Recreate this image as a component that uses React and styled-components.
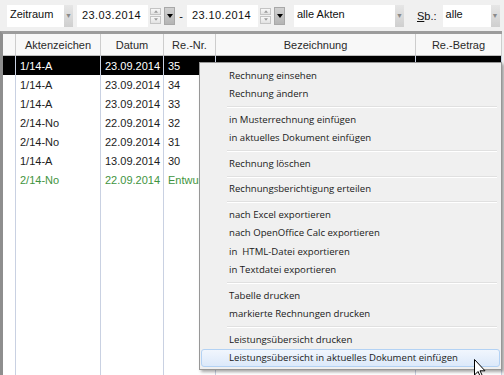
import React from "react";
import styled, { createGlobalStyle } from "styled-components";

const GlobalStyle = createGlobalStyle`
  html, body { margin: 0; padding: 0; background: #f0f0f0; }
  body { font-family: "Liberation Sans", Arial, sans-serif; }
`;

const Screen = styled.div`
  position: relative;
  width: 504px;
  height: 375px;
  overflow: hidden;
  background: #f0f0f0;
  display: flex;
  flex-direction: column;
`;

const Toolbar = styled.div`
  height: 31px;
  flex: none;
  display: flex;
  align-items: center;
  padding-left: 7px;
  font-size: 11px;
  color: #111;
`;

const Combo = styled.div`
  width: ${(p) => p.$w}px;
  height: 22px;
  display: flex;
  margin-right: ${(p) => p.$mr || 0}px;
  background: #fff;
`;

const ComboText = styled.div`
  flex: 1;
  padding: 3px 0 0 3px;
`;

const ComboBtn = styled.div`
  width: 9px;
  display: flex;
  align-items: center;
  justify-content: center;
  background: linear-gradient(#e6e6e6, #cfcfcf);
  color: #8a8a8a;
  font-size: 7px;
`;

const DateField = styled.div`
  width: 71px;
  height: 22px;
  box-sizing: border-box;
  padding: 4px 0 0 5px;
  background: #fff;
  letter-spacing: 0.4px;
`;

const Spin = styled.div`
  width: 11px;
  height: 16px;
  margin: 0 3px 0 2px;
  display: flex;
  flex-direction: column;
  gap: 1px;
`;

const SpinPart = styled.div`
  flex: 1;
  border: 1px solid #c4c4c4;
  background: linear-gradient(#f8f8f8, #e2e2e2);
  display: flex;
  align-items: center;
  justify-content: center;
`;

const DropBtn = styled.div`
  width: 11px;
  height: 18px;
  display: flex;
  align-items: center;
  justify-content: center;
  background: linear-gradient(#d0d0d0, #b4b4b4);
  border: 1px solid #a8a8a8;
  box-sizing: border-box;
  margin-right: ${(p) => p.$mr || 0}px;
`;

const Dash = styled.span`
  width: 12px;
  text-align: center;
`;

const Label = styled.span`
  margin-right: 6px;
  u { text-decoration: underline; }
`;

const Grid = styled.div`
  flex: 1;
  width: 499px;
  display: flex;
  flex-direction: column;
  background: #fff;
  border-top: 3px solid #9c9c9c;
  border-left: 3px solid #8e8e8e;
  font-size: 11px;
`;

const Row = styled.div`
  display: grid;
  grid-template-columns: 13px 85px 63px 52px 200px 86px;
  height: ${(p) => (p.$fill ? "auto" : p.$head ? "22px" : "19px")};
  flex: ${(p) => (p.$fill ? 1 : "none")};
  background: ${(p) => (p.$selected ? "#000" : "transparent")};
  color: ${(p) => (p.$selected ? "#fff" : p.$draft ? "#3f9440" : "#1c1c1c")};
`;

const Cell = styled.div`
  box-sizing: border-box;
  padding: 0 4px;
  display: flex;
  align-items: center;
  justify-content: ${(p) =>
    p.$align === "center" ? "center" : p.$align === "right" ? "flex-end" : "flex-start"};
  white-space: nowrap;
  overflow: hidden;
  border-right: 1px solid ${(p) => (p.$head ? "#cdcdcd" : "#c9d1e2")};
  background: ${(p) => (p.$head ? "#f8f8f8" : "transparent")};
  border-bottom: ${(p) => (p.$head ? "1px solid #bdbdbd" : "none")};
  color: ${(p) => (p.$head ? "#2a2a2a" : "inherit")};
`;

const Menu = styled.div`
  position: absolute;
  left: 199px;
  top: 62px;
  width: 303px;
  box-sizing: border-box;
  padding: 3px 1px 2px 1px;
  background: #f0f0f0;
  border: 1px solid #979797;
  box-shadow: 2px 2px 3px rgba(0, 0, 0, 0.35);
  font-family: "Open Sans", "Noto Sans", sans-serif;
  font-size: 9.6px;
  color: #1a1a1a;
`;

const Item = styled.div`
  height: 18.5px;
  box-sizing: border-box;
  display: flex;
  align-items: center;
  padding-left: 27px;
  white-space: pre;
  border: 1px solid ${(p) => (p.$hot ? "#b3d2f4" : "transparent")};
  border-radius: 3px;
  background: ${(p) => (p.$hot ? "linear-gradient(#f1f6fd, #dce9fa)" : "transparent")};
`;

const Sep = styled.div`
  margin: 3px 3px 2px 26px;
  border-top: 1px solid #e0e0e0;
  border-bottom: 1px solid #fff;
`;

const Cursor = styled.svg`
  position: absolute;
  left: 474px;
  top: 359px;
`;

const rows = [
  { akt: "1/14-A", datum: "23.09.2014", nr: "35", bez: "Kostennote zur Vorschussrechnung", betrag: "80,00", selected: true },
  { akt: "1/14-A", datum: "23.09.2014", nr: "34" },
  { akt: "1/14-A", datum: "23.09.2014", nr: "33" },
  { akt: "2/14-No", datum: "22.09.2014", nr: "32" },
  { akt: "2/14-No", datum: "22.09.2014", nr: "31" },
  { akt: "1/14-A", datum: "13.09.2014", nr: "30" },
  { akt: "2/14-No", datum: "22.09.2014", nr: "Entwurf", draft: true },
];

const menu = [
  ["Rechnung einsehen", "Rechnung ändern"],
  ["in Musterrechnung einfügen", "in aktuelles Dokument einfügen"],
  ["Rechnung löschen"],
  ["Rechnungsberichtigung erteilen"],
  ["nach Excel exportieren", "nach OpenOffice Calc exportieren", "in  HTML-Datei exportieren", "in Textdatei exportieren"],
  ["Tabelle drucken", "markierte Rechnungen drucken"],
  ["Leistungsübersicht drucken", "Leistungsübersicht in aktuelles Dokument einfügen"],
];

const Tri = ({ up, color = "#000", w = 5 }) => (
  <svg width={w} height={Math.ceil(w / 2) + 1} viewBox="0 0 6 4">
    <polygon points={up ? "0,4 6,4 3,0" : "0,0 6,0 3,4"} fill={color} />
  </svg>
);

const DatePicker = ({ value, mr }) => (
  <>
    <DateField>{value}</DateField>
    <Spin>
      <SpinPart><Tri up color="#9a9a9a" w={4} /></SpinPart>
      <SpinPart><Tri color="#9a9a9a" w={4} /></SpinPart>
    </Spin>
    <DropBtn $mr={mr}><Tri w={6} /></DropBtn>
  </>
);

export default function App() {
  return (
    <Screen>
      <GlobalStyle />
      <Toolbar>
        <Combo $w={66} $mr={4}>
          <ComboText>Zeitraum</ComboText>
          <ComboBtn>▼</ComboBtn>
        </Combo>
        <DatePicker value="23.03.2014" />
        <Dash>-</Dash>
        <DatePicker value="23.10.2014" mr={9} />
        <Combo $w={110} $mr={13}>
          <ComboText>alle Akten</ComboText>
          <ComboBtn>▼</ComboBtn>
        </Combo>
        <Label><u>S</u>b.:</Label>
        <Combo $w={57}>
          <ComboText>alle</ComboText>
          <ComboBtn>▼</ComboBtn>
        </Combo>
      </Toolbar>

      <Grid>
        <Row $head>
          <Cell $head />
          <Cell $head $align="center">Aktenzeichen</Cell>
          <Cell $head $align="center">Datum</Cell>
          <Cell $head $align="center">Re.-Nr.</Cell>
          <Cell $head $align="center">Bezeichnung</Cell>
          <Cell $head $align="center">Re.-Betrag</Cell>
        </Row>
        {rows.map((r, i) => (
          <Row key={i} $selected={r.selected} $draft={r.draft}>
            <Cell />
            <Cell>{r.akt}</Cell>
            <Cell>{r.datum}</Cell>
            <Cell>{r.nr}</Cell>
            <Cell>{r.bez}</Cell>
            <Cell $align="right">{r.betrag}</Cell>
          </Row>
        ))}
        <Row $fill>
          <Cell />
          <Cell />
          <Cell />
          <Cell />
          <Cell />
          <Cell />
        </Row>
      </Grid>

      <Menu>
        {menu.map((group, gi) => (
          <React.Fragment key={gi}>
            {gi > 0 && <Sep />}
            {group.map((label) => (
              <Item key={label} $hot={label.startsWith("Leistungsübersicht in")}>
                {label}
              </Item>
            ))}
          </React.Fragment>
        ))}
      </Menu>

      <Cursor width="12" height="19" viewBox="0 0 12 19">
        <path
          d="M0.5 0.5 L0.5 16 L4 12.5 L6.5 18 L8.5 17 L6 11.8 L11 11.8 Z"
          fill="#fff"
          stroke="#000"
          strokeWidth="1"
          strokeLinejoin="round"
        />
      </Cursor>
    </Screen>
  );
}
